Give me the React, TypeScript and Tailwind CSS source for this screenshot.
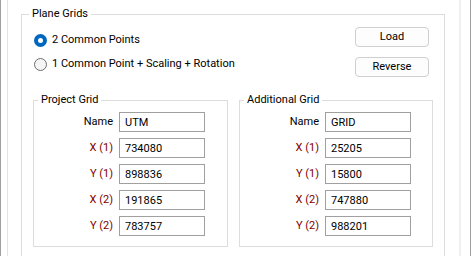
import React from "react";

const rowsA = [
  { label: "Name", value: "UTM", red: false },
  { label: "X (1)", value: "734080", red: true },
  { label: "Y (1)", value: "898836", red: true },
  { label: "X (2)", value: "191865", red: true },
  { label: "Y (2)", value: "783757", red: true },
];
const rowsB = [
  { label: "Name", value: "GRID", red: false },
  { label: "X (1)", value: "25205", red: true },
  { label: "Y (1)", value: "15800", red: true },
  { label: "X (2)", value: "747880", red: true },
  { label: "Y (2)", value: "988201", red: true },
];

function Grid({ title, rows, width }: { title: string; rows: typeof rowsA; width: string }) {
  return (
    <fieldset className={`${width} h-[155px] border border-[#dcdcdc] p-0 m-0`}>
      <legend className="ml-[4px] px-[3px] leading-[16px] text-[#000]">{title}</legend>
      <div className="flex flex-col gap-[6px] pt-[4px]">
        {rows.map((r) => (
          <div key={r.label} className="flex items-center h-[20px]">
            <span className={`w-[79px] text-right ${r.red ? "text-[#800000]" : "text-black"}`}>{r.label}</span>
            <input
              readOnly
              defaultValue={r.value}
              className="ml-[6px] w-[86px] h-[20px] border border-[#a0a0a0] bg-white pl-[5px] text-black outline-none"
            />
          </div>
        ))}
      </div>
    </fieldset>
  );
}

function Radio({ checked, label }: { checked: boolean; label: string }) {
  return (
    <div className="flex items-center h-[24px]">
      {checked ? (
        <span className="w-[13px] h-[13px] rounded-full bg-[#0067c0] flex items-center justify-center">
          <span className="w-[5px] h-[5px] rounded-full bg-white" />
        </span>
      ) : (
        <span className="w-[13px] h-[13px] rounded-full border border-[#6e6e6e] bg-[#f5f5f5]" />
      )}
      <span className="ml-[5px] text-black">{label}</span>
    </div>
  );
}

function Btn({ children }: { children: React.ReactNode }) {
  return (
    <button className="w-[74px] h-[20px] rounded-[4px] border border-[#d0d0d0] bg-[#fdfdfd] text-black leading-[18px]">
      {children}
    </button>
  );
}

export default function App() {
  return (
    <div className="w-[471px] h-[256px] overflow-hidden bg-white flex font-['Roboto',sans-serif] text-[11px]">
      <div className="w-px bg-[#a0a0a0]" />
      <div className="w-[6px]" />
      <div className="w-px bg-[#e3e3e3]" />
      <div className="w-[13px]" />
      <fieldset className="w-[424px] h-[280px] mt-[6px] border border-[#dcdcdc] p-0 m-0 shrink-0">
        <legend className="ml-[7px] px-[3px] leading-[16px] text-black">Plane Grids</legend>
        <div className="h-[70px] flex justify-between pl-[12px] pr-[15px]">
          <div className="pt-[6px] flex flex-col">
            <Radio checked label="2 Common Points" />
            <Radio checked={false} label="1 Common Point + Scaling + Rotation" />
          </div>
          <div className="pt-[5px] flex flex-col gap-[10px]">
            <Btn>Load</Btn>
            <Btn>Reverse</Btn>
          </div>
        </div>
        <div className="flex pl-[11px] gap-[11px]">
          <Grid title="Project Grid" rows={rowsA} width="w-[195px]" />
          <Grid title="Additional Grid" rows={rowsB} width="w-[194px]" />
        </div>
      </fieldset>
      <div className="w-[14px]" />
      <div className="w-[2px] bg-[#f0f0f0]" />
      <div className="w-[9px]" />
      <div className="w-px bg-[#a0a0a0]" />
    </div>
  );
}
